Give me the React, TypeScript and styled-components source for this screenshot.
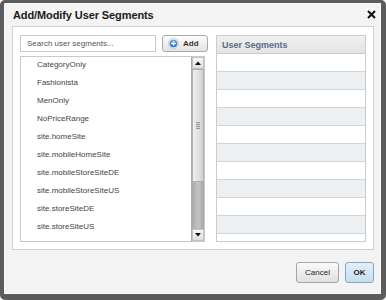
import React from "react";
import styled, { createGlobalStyle } from "styled-components";

const Global = createGlobalStyle`
  html, body { margin: 0; padding: 0; background: #ffffff; }
  body { font-family: "Liberation Sans", Arial, sans-serif; }
  * { box-sizing: border-box; }
`;

const Dialog = styled.div`
  width: 386px;
  height: 300px;
  border-style: solid;
  border-color: #5c5c5c;
  border-width: 3px 5px 6px 4px;
  border-radius: 5px;
  background: #f3f3f3;
  box-shadow: inset 0 0 0 1px #fbfbfb;
  display: flex;
  flex-direction: column;
`;

const TitleBar = styled.div`
  height: 23px;
  display: flex;
  align-items: center;
  justify-content: space-between;
  padding: 0 5px 0 9px;
`;

const Title = styled.div`
  font-size: 11px;
  font-weight: bold;
  color: #1a1a1a;
  letter-spacing: -0.1px;
`;

const CloseBtn = styled.button`
  width: 9px;
  height: 9px;
  padding: 0;
  border: 0;
  background: transparent;
  display: flex;
  cursor: pointer;
`;

const Panel = styled.div`
  margin-left: 8px;
  width: 362px;
  height: 224px;
  background: #ffffff;
  border: 1px solid #cfcfcf;
  padding: 8px 7px 7px 7px;
  display: grid;
  grid-template-columns: 196px 150px;
`;

const LeftCol = styled.div`
  display: flex;
  flex-direction: column;
  gap: 4px;
`;

const SearchRow = styled.div`
  display: flex;
  gap: 6px;
  height: 17px;
`;

const SearchInput = styled.input`
  width: 136px;
  height: 17px;
  border: 1px solid #c9c9c9;
  padding: 0 6px;
  font-family: "Liberation Sans", Arial, sans-serif;
  font-size: 8px;
  color: #333;
  outline: none;
  &::placeholder { color: #555; }
`;

const AddButton = styled.button`
  width: 46px;
  height: 17px;
  border: 1px solid #a9a9a9;
  border-radius: 3px;
  background: linear-gradient(#fdfdfd, #e2e2e2);
  display: flex;
  align-items: center;
  gap: 4px;
  padding: 0 0 0 5px;
  font-family: "Liberation Sans", Arial, sans-serif;
  font-size: 8px;
  font-weight: bold;
  color: #333;
`;

const ListBox = styled.div`
  width: 185px;
  height: 186px;
  border: 1px solid #c9c9c9;
  display: flex;
`;

const Items = styled.div`
  flex: 1;
  display: flex;
  flex-direction: column;
  overflow: hidden;
`;

const Item = styled.div`
  height: 18px;
  flex: none;
  display: flex;
  align-items: center;
  padding: 0 0 3px 16px;
  font-size: 8px;
  color: #444;
`;

const ScrollBar = styled.div`
  width: 13px;
  display: flex;
  flex-direction: column;
  background: linear-gradient(90deg, #a9a9a9, #c4c4c4 50%, #a5a5a5);
  border-left: 1px solid #a9a9a9;
`;

const ScrollBtn = styled.div`
  height: 12px;
  flex: none;
  background: linear-gradient(#f8f8f8, #dedede);
  border: 1px solid #c2c2c2;
  display: flex;
  align-items: center;
  justify-content: center;
`;

const Thumb = styled.div<{ $h: number }>`
  height: ${(p) => p.$h}px;
  flex: none;
  background: linear-gradient(90deg, #eeeeee, #e0e0e0 60%, #cfcfcf);
  border: 1px solid #b0b0b0;
  display: flex;
  align-items: center;
  justify-content: center;
`;

const Grip = styled.div`
  width: 4px;
  height: 7px;
  background: repeating-linear-gradient(#999 0 1px, #d5d5d5 1px 2px);
`;

const Track = styled.div`
  flex: 1;
`;

const Table = styled.div`
  width: 150px;
  height: 207px;
  border: 1px solid #cbcbcb;
  display: flex;
  flex-direction: column;
  overflow: hidden;
`;

const Header = styled.div`
  height: 18px;
  flex: none;
  background: linear-gradient(#f0f0f0, #e3e3e3);
  border-bottom: 1px solid #cbcbcb;
  display: flex;
  align-items: center;
  padding-left: 5px;
  font-size: 9px;
  font-weight: bold;
  color: #5b6b88;
`;

const Row = styled.div<{ $alt: boolean }>`
  height: 18px;
  flex: none;
  background: ${(p) => (p.$alt ? "#ecf0f3" : "#ffffff")};
  border-bottom: 1px solid #d2d6d9;
`;

const Footer = styled.div`
  display: flex;
  justify-content: flex-end;
  gap: 6px;
  margin-top: 12px;
  width: 370px;
`;

const Btn = styled.button<{ $primary?: boolean }>`
  height: 21px;
  padding: 0;
  width: ${(p) => (p.$primary ? "29px" : "43px")};
  border-radius: 3px;
  border: 1px solid ${(p) => (p.$primary ? "#7fa9c6" : "#a5a5a5")};
  background: ${(p) =>
    p.$primary
      ? "linear-gradient(#e3f0f8, #c6deed)"
      : "linear-gradient(#fbfbfb, #dfdfdf)"};
  font-family: "Liberation Sans", Arial, sans-serif;
  font-size: 8px;
  font-weight: ${(p) => (p.$primary ? "bold" : "normal")};
  color: #222;
`;

const segments = [
  "CategoryOnly",
  "Fashionista",
  "MenOnly",
  "NoPriceRange",
  "site.homeSite",
  "site.mobileHomeSite",
  "site.mobileStoreSiteDE",
  "site.mobileStoreSiteUS",
  "site.storeSiteDE",
  "site.storeSiteUS",
];

const PlusIcon = () => (
  <svg width="11" height="11" viewBox="0 0 11 11">
    <defs>
      <linearGradient id="pg" x1="0" y1="0" x2="0" y2="1">
        <stop offset="0" stopColor="#5aa9ea" />
        <stop offset="1" stopColor="#1f6fbf" />
      </linearGradient>
    </defs>
    <circle cx="5.5" cy="5.5" r="5" fill="#e8eef4" stroke="#b9c4cf" strokeWidth="0.8" />
    <circle cx="5.5" cy="5.5" r="3.8" fill="url(#pg)" />
    <path d="M5.5 3.3v4.4M3.3 5.5h4.4" stroke="#fff" strokeWidth="1.3" />
  </svg>
);

const CloseIcon = () => (
  <svg width="9" height="9" viewBox="0 0 9 9">
    <path d="M1 1L8 8M8 1L1 8" stroke="#111" strokeWidth="2.1" />
  </svg>
);

const Arrow = ({ up }: { up: boolean }) => (
  <svg width="6" height="4" viewBox="0 0 6 4">
    <path d={up ? "M0 4L3 0.5L6 4Z" : "M0 0L3 3.5L6 0Z"} fill="#111" />
  </svg>
);

export default function App() {
  return (
    <>
      <Global />
      <Dialog>
        <TitleBar>
          <Title>Add/Modify User Segments</Title>
          <CloseBtn aria-label="Close">
            <CloseIcon />
          </CloseBtn>
        </TitleBar>
        <Panel>
          <LeftCol>
            <SearchRow>
              <SearchInput placeholder="Search user segments..." />
              <AddButton>
                <PlusIcon />
                Add
              </AddButton>
            </SearchRow>
            <ListBox>
              <Items>
                {segments.map((s) => (
                  <Item key={s}>{s}</Item>
                ))}
              </Items>
              <ScrollBar>
                <ScrollBtn>
                  <Arrow up />
                </ScrollBtn>
                <Thumb $h={113}>
                  <Grip />
                </Thumb>
                <Track />
                <ScrollBtn>
                  <Arrow up={false} />
                </ScrollBtn>
              </ScrollBar>
            </ListBox>
          </LeftCol>
          <Table>
            <Header>User Segments</Header>
            {Array.from({ length: 11 }).map((_, i) => (
              <Row key={i} $alt={i % 2 === 1} />
            ))}
          </Table>
        </Panel>
        <Footer>
          <Btn>Cancel</Btn>
          <Btn $primary>OK</Btn>
        </Footer>
      </Dialog>
    </>
  );
}
